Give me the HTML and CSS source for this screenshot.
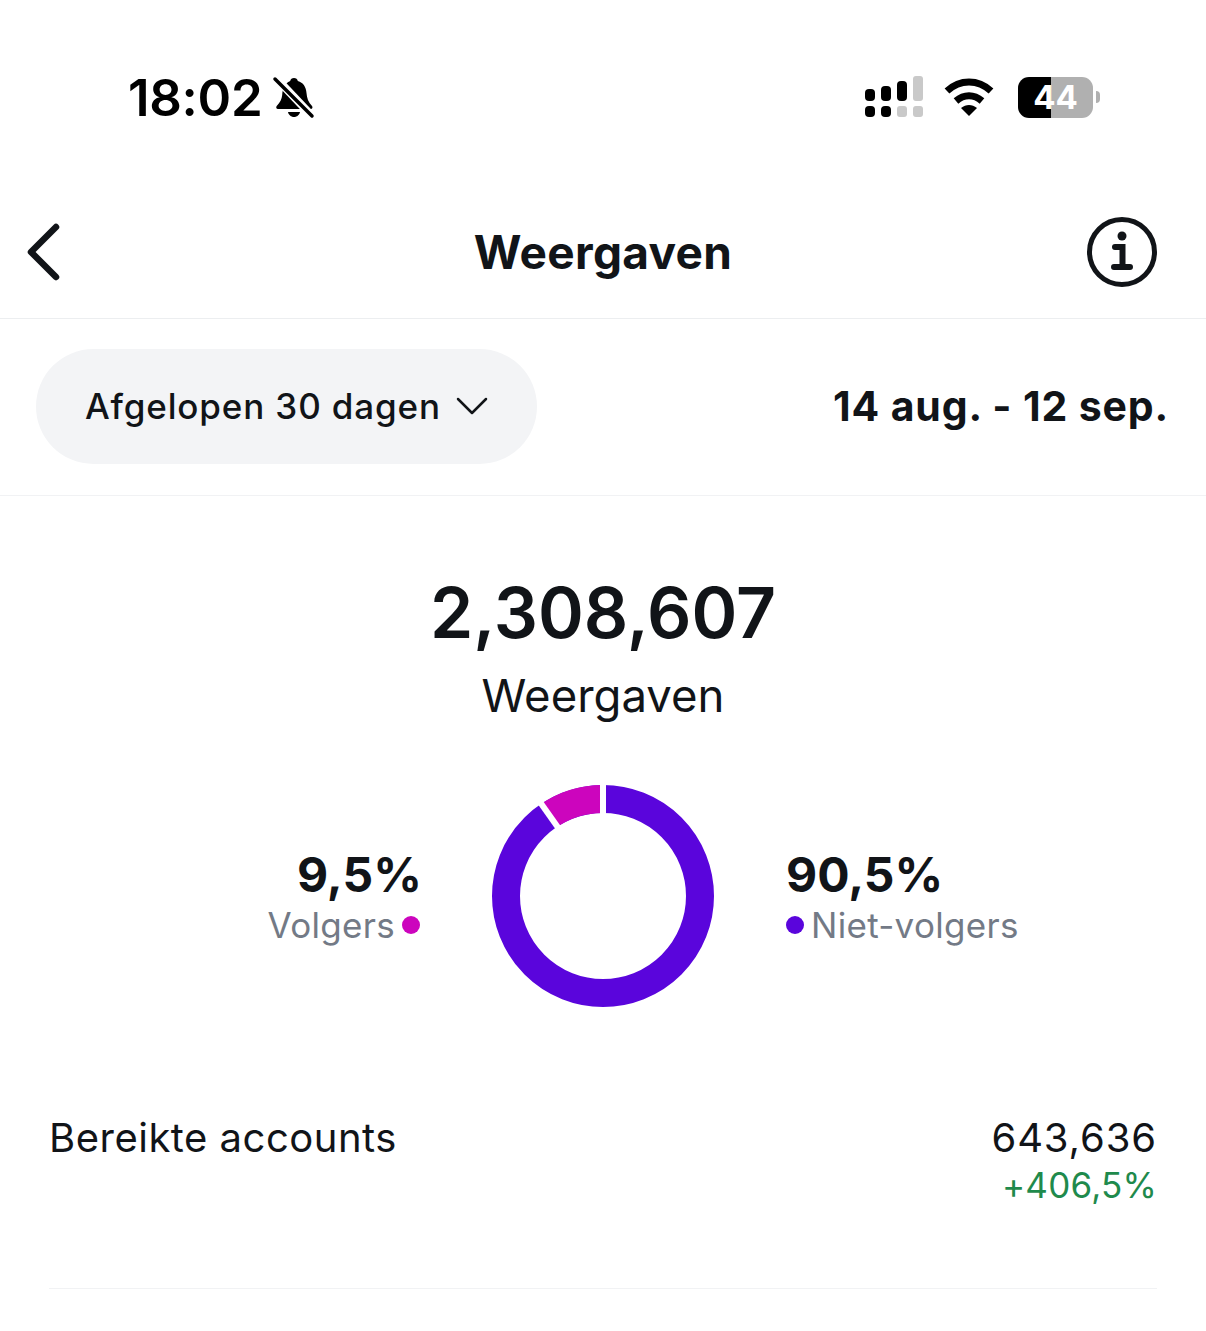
FILE: index.html
```html
<!DOCTYPE html>
<html lang="nl">
<head>
  <meta charset="UTF-8">
  <meta name="viewport" content="width=device-width, initial-scale=1.0">
  <title>Weergaven</title>
  <link rel="stylesheet" href="styles.css">
</head>
<body>
  <div class="status-bar">
    <div class="status-left">
      <span class="time">18:02</span>
      <svg class="bell" width="44" height="44" viewBox="0 0 44 44">
        <path d="M22 3c2 0 3.500 1.300 3.800 3 5.500 1.500 8.200 6 8.700 12 .4 5 1.700 9 5.500 13 1 1.200.4 3-1.300 3H6c-1.700 0-2.300-1.800-1.300-3 3.500-3.500 5-7 5.500-11 .4-6 2.500-12 8-14 .3-1.700 1.800-3 3.800-3z" fill="#000"/>
        <path d="M16 37h12c-.5 2.700-3 5-6 5s-5.500-2.300-6-5z" fill="#000"/>
        <path d="M4 3l36 38" stroke="#fff" stroke-width="8" fill="none"/>
        <path d="M3 4l37 37" stroke="#000" stroke-width="3.500" fill="none" stroke-linecap="round"/>
      </svg>
    </div>
    <div class="status-right">
      <svg width="60" height="42" viewBox="0 0 60 42">
        <rect x="1" y="13" width="10" height="12" rx="4" fill="#000"/>
        <rect x="17" y="10" width="10" height="15" rx="4" fill="#000"/>
        <rect x="33" y="5" width="10" height="20" rx="4" fill="#000"/>
        <rect x="49" y="0" width="10" height="25" rx="3" fill="#c9c9c9"/>
        <rect x="1" y="30" width="10" height="11" rx="4" fill="#000"/>
        <rect x="17" y="30" width="10" height="11" rx="4" fill="#000"/>
        <rect x="33" y="30" width="10" height="11" rx="3" fill="#c9c9c9"/>
        <rect x="49" y="30" width="10" height="11" rx="3" fill="#c9c9c9"/>
      </svg>
      <svg class="wifi" width="50" height="38" viewBox="0 0 50 38">
        <path d="M3 13C16 1 34 1 47 13" stroke="#000" stroke-width="7" fill="none"/>
        <path d="M12 23c8-7 18-7 26 0" stroke="#000" stroke-width="7" fill="none"/>
        <path d="M17 30c5-4 11-4 16 0l-8 8z" fill="#000"/>
      </svg>
      <div class="battery">
        <div class="battery-body"><span>44</span></div>
        <div class="battery-tip"></div>
      </div>
    </div>
  </div>

  <header class="nav">
    <svg class="back" width="36" height="60" viewBox="0 0 36 60">
      <path d="M32 5L7 30l25 25" stroke="#111418" stroke-width="6.500" fill="none" stroke-linecap="round" stroke-linejoin="round"/>
    </svg>
    <h1>Weergaven</h1>
    <svg class="info" width="72" height="72" viewBox="0 0 72 72">
      <circle cx="36" cy="36" r="32.500" stroke="#111418" stroke-width="5" fill="none"/>
      <circle cx="36" cy="20" r="4.500" fill="#111418"/>
      <path d="M29 31h7.500v20M28 51h16" stroke="#111418" stroke-width="6" fill="none" stroke-linecap="round"/>
    </svg>
  </header>

  <div class="filter-row">
    <div class="pill">
      <span>Afgelopen 30 dagen</span>
      <svg width="32" height="20" viewBox="0 0 32 20">
        <path d="M2 3l14 14L30 3" stroke="#111418" stroke-width="2.500" fill="none" stroke-linecap="round" stroke-linejoin="round"/>
      </svg>
    </div>
    <div class="dates">14 aug. - 12 sep.</div>
  </div>

  <section class="summary">
    <div class="total">2,308,607</div>
    <div class="total-label">Weergaven</div>

    <div class="split">
      <div class="split-side left">
        <div class="pct">9,5%</div>
        <div class="legend">Volgers<i class="dot magenta"></i></div>
      </div>
      <svg class="donut" width="222" height="222" viewBox="0 0 222 222">
        <circle cx="111" cy="111" r="97" stroke="#5a05dc" stroke-width="28" fill="none"/>
        <path d="M111 14A97 97 0 0 0 56.500 30.800" stroke="#cc05bd" stroke-width="28" fill="none"/>
        <path d="M111 -4V30" stroke="#fff" stroke-width="6"/>
        <path d="M45.500 13.500L66 42.500" stroke="#fff" stroke-width="6"/>
      </svg>
      <div class="split-side right">
        <div class="pct">90,5%</div>
        <div class="legend"><i class="dot purple"></i>Niet-volgers</div>
      </div>
    </div>
  </section>

  <div class="metric">
    <div class="metric-name">Bereikte accounts</div>
    <div class="metric-values">
      <div>643,636</div>
      <div class="delta">+406,5%</div>
    </div>
  </div>
</body>
</html>
```

FILE: styles.css
```css
body {
  margin: 0;
  background: #fff;
  color: #111418;
  font-family: Inter, "Liberation Sans", sans-serif;
}

.status-bar {
  display: flex;
  justify-content: space-between;
  align-items: center;
  height: 196px;
  padding: 0 106px 2px 128px;
  box-sizing: border-box;
  color: #000;
}

.status-left, .status-right {
  display: flex;
  align-items: center;
}

.time {
  font-size: 51px;
  font-weight: 600;
  letter-spacing: -0.3px;
}

.bell {
  margin-left: 10px;
}

.wifi {
  margin: 0 24px 0 20px;
}

.battery {
  display: flex;
  align-items: center;
}

.battery-body {
  width: 75px;
  height: 41px;
  border-radius: 11px;
  background: linear-gradient(to right, #000 44%, #b0b0b0 44%);
  color: #fff;
  font-size: 33px;
  font-weight: 700;
  line-height: 41px;
  text-align: center;
}

.battery-tip {
  width: 4px;
  height: 12px;
  margin-left: 3px;
  border-radius: 0 6px 6px 0;
  background: #b0b0b0;
}

.nav {
  display: grid;
  grid-template-columns: 1fr auto 1fr;
  align-items: center;
  height: 112px;
  padding: 0 48px 10px;
  border-bottom: 1px solid #eceef0;
}

.back {
  margin-left: -24px;
}

.nav h1 {
  margin: 0;
  font-size: 46px;
  font-weight: 700;
  letter-spacing: 0.3px;
}

.info {
  justify-self: end;
}

.filter-row {
  display: flex;
  justify-content: space-between;
  align-items: center;
  height: 174px;
  padding: 0 37px 2px 36px;
  border-bottom: 1px solid #f1f2f4;
}

.pill {
  display: flex;
  align-items: center;
  gap: 15px;
  height: 115px;
  padding: 0 49px;
  border-radius: 58px;
  background: #f3f4f6;
  font-size: 35px;
  font-weight: 500;
  letter-spacing: 0.85px;
}

.dates {
  font-size: 41px;
  font-weight: 700;
  letter-spacing: 0.85px;
}

.summary {
  text-align: center;
  padding-top: 72px;
}

.total {
  font-size: 69.500px;
  font-weight: 600;
  line-height: 90px;
}

.total-label {
  font-size: 45.500px;
  line-height: 60px;
  margin-top: 8px;
}

.split {
  display: grid;
  grid-template-columns: 1fr auto 1fr;
  gap: 72px;
  align-items: center;
  margin-top: 59px;
}

.split-side {
  margin-top: 1px;
}

.left {
  text-align: right;
}

.left .pct {
  margin-right: -2px;
}

.right {
  text-align: left;
}

.pct {
  font-size: 48px;
  font-weight: 700;
  line-height: 56px;
}

.legend {
  display: flex;
  align-items: center;
  gap: 7px;
  font-size: 35px;
  line-height: 44px;
  letter-spacing: 0.3px;
  color: #737a86;
}

.left .legend {
  justify-content: flex-end;
}

.dot {
  width: 18px;
  height: 18px;
  border-radius: 50%;
}

.magenta {
  background: #cc05bd;
}

.purple {
  background: #5a05dc;
}

.donut {
  display: block;
}

.metric {
  display: flex;
  justify-content: space-between;
  margin: 107px 49px 0;
  padding-bottom: 78px;
  border-bottom: 1px solid #f1f2f4;
  font-size: 40px;
  line-height: 48px;
  letter-spacing: 0.5px;
}

.metric-values {
  text-align: right;
  letter-spacing: 0.9px;
}

.delta {
  font-size: 35px;
  margin-top: -1px;
  margin-bottom: 1px;
  letter-spacing: 0.2px;
  color: #1f8a4c;
}
```
